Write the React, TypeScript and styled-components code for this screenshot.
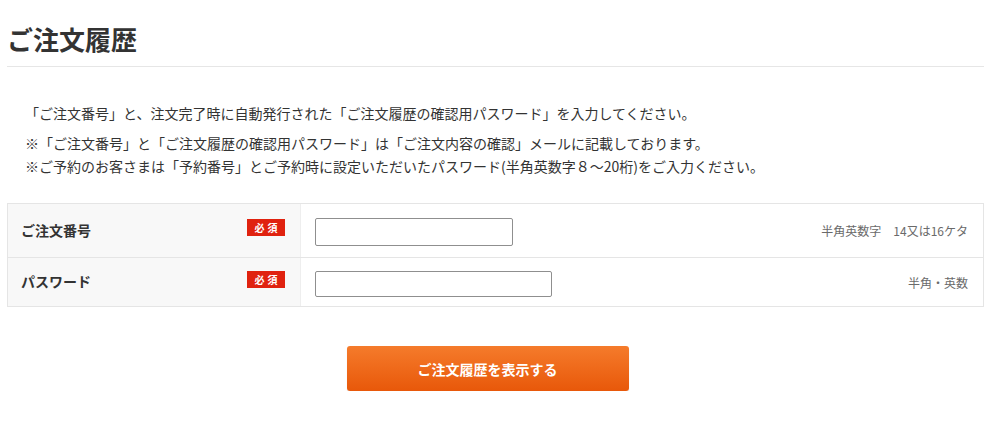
import styled, { createGlobalStyle } from "styled-components";

const GlobalStyle = createGlobalStyle`
  body {
    margin: 0;
    background: #fff;
    color: #333;
    font-family: "Noto Sans CJK JP", "Noto Sans", sans-serif;
  }
`;

const Page = styled.div`
  padding: 0 16px 0 7px;
`;

const Title = styled.h1`
  margin: 0;
  padding: 22px 0 11px;
  font-size: 26px;
  line-height: 33px;
  font-weight: 700;
  color: #333;
  border-bottom: 1px solid #e6e6e6;
`;

const Intro = styled.div`
  padding: 35px 0 0 18px;
  font-size: 14px;
  color: #333;
`;

const Lead = styled.p`
  margin: 0 0 7px;
  line-height: 23px;
`;

const Note = styled.p`
  margin: 0;
  line-height: 23px;
`;

const FormTable = styled.div`
  margin-top: 25px;
  border: 1px solid #e5e5e5;
  border-bottom: none;
`;

const Row = styled.div<{ $height: number }>`
  display: grid;
  grid-template-columns: 293px 1fr;
  height: ${(p) => p.$height}px;
  border-bottom: 1px solid #e5e5e5;
`;

const Head = styled.div`
  display: flex;
  align-items: center;
  justify-content: space-between;
  padding: 0 15px 2px 13px;
  background: #f8f8f8;
  border-right: 1px solid #eeeeee;
`;

const Label = styled.span`
  font-size: 14px;
  font-weight: 700;
  color: #333;
`;

const Badge = styled.span`
  display: inline-flex;
  align-items: center;
  justify-content: center;
  width: 38px;
  height: 17px;
  background: #e0220f;
  color: #fff;
  font-size: 10px;
  font-weight: 700;
  letter-spacing: 3px;
  padding-left: 3px;
  box-sizing: border-box;
  margin-bottom: 4px;
`;

const Cell = styled.div`
  display: flex;
  align-items: center;
  justify-content: space-between;
  padding: 0 15px 0 14px;
`;

const Input = styled.input<{ $w: number; $h: number }>`
  width: ${(p) => p.$w}px;
  height: ${(p) => p.$h}px;
  box-sizing: border-box;
  border: 1px solid #8f8f8f;
  border-radius: 2px;
  background: #fff;
  margin-top: 3px;
  padding: 0 6px;
  font-size: 14px;
`;

const Hint = styled.span`
  font-size: 12px;
  color: #6a6a6a;
`;

const ButtonRow = styled.div`
  display: flex;
  justify-content: center;
  padding: 39px 16px 0 0;
`;

const Submit = styled.button`
  width: 282px;
  height: 45px;
  border: none;
  border-radius: 3px;
  background: linear-gradient(#f57b2b, #e8580a);
  box-shadow: 0 1px 1px rgba(0, 0, 0, 0.15);
  color: #fff;
  font-family: "Noto Sans CJK JP", sans-serif;
  font-size: 14px;
  font-weight: 700;
  cursor: pointer;
`;

const fields = [
  { label: "ご注文番号", hint: "半角英数字　14又は16ケタ", w: 198, h: 28, row: 53 },
  { label: "パスワード", hint: "半角・英数", w: 237, h: 26, row: 48 },
];

const App = () => {
  return (
    <Page>
      <GlobalStyle />
      <Title>ご注文履歴</Title>
      <Intro>
        <Lead>「ご注文番号」と、注文完了時に自動発行された「ご注文履歴の確認用パスワード」を入力してください。</Lead>
        <Note>※「ご注文番号」と「ご注文履歴の確認用パスワード」は「ご注文内容の確認」メールに記載しております。</Note>
        <Note>※ご予約のお客さまは「予約番号」とご予約時に設定いただいたパスワード(半角英数字８～20桁)をご入力ください。</Note>
      </Intro>
      <FormTable>
        {fields.map((f) => (
          <Row key={f.label} $height={f.row}>
            <Head>
              <Label>{f.label}</Label>
              <Badge>必須</Badge>
            </Head>
            <Cell>
              <Input type={f.label === "パスワード" ? "password" : "text"} $w={f.w} $h={f.h} />
              <Hint>{f.hint}</Hint>
            </Cell>
          </Row>
        ))}
      </FormTable>
      <ButtonRow>
        <Submit>ご注文履歴を表示する</Submit>
      </ButtonRow>
    </Page>
  );
};

export default App;
